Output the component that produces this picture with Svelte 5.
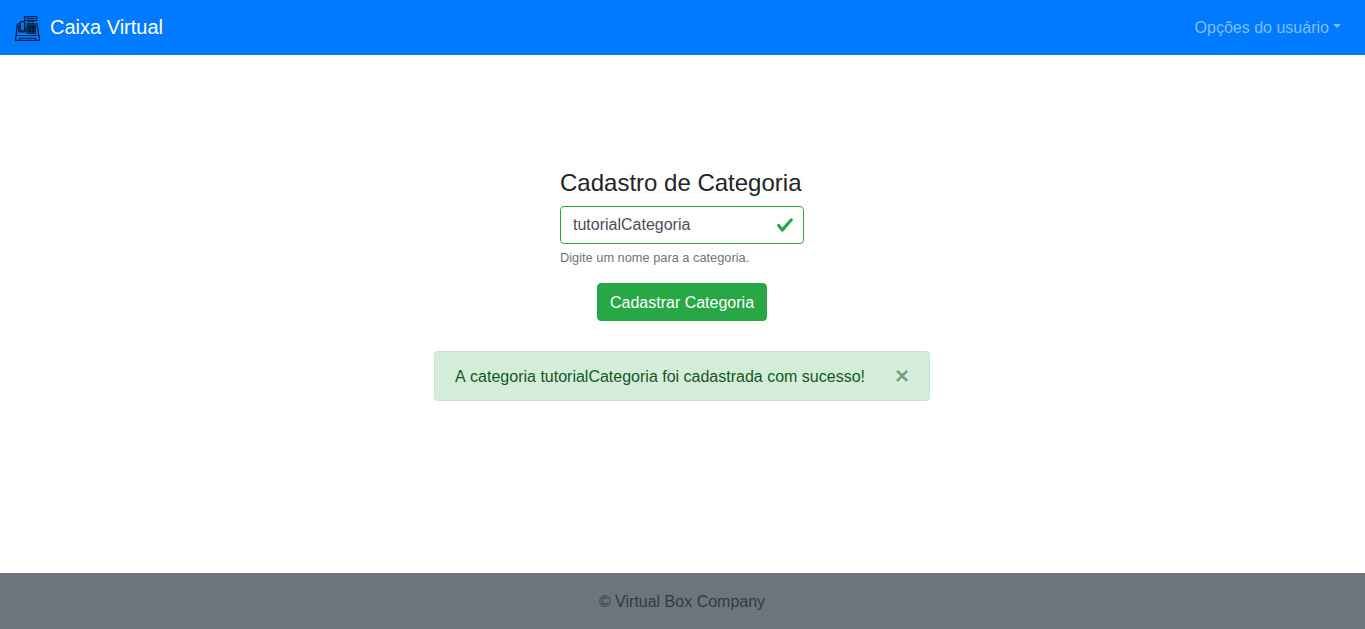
<script>
  let category = $state('tutorialCategoria');
  let saved = $state('tutorialCategoria');
  let open = $state(true);

  function submit(event) {
    event.preventDefault();
    saved = category;
    open = true;
  }
</script>

<div class="page">
  <nav class="navbar">
    <a class="brand" href="#inicio">
      <svg class="logo" viewBox="0 0 25 25" width="25" height="25" fill="none" stroke="#04203f" stroke-width="1.25" stroke-linejoin="round">
        <rect x="9.5" y="0.6" width="12.4" height="4.1" rx=".5" />
        <path d="M11.5 2.6h8.2" stroke-width="1.1" />
        <path d="M14 4.8v2.7M17.2 4.8v2.7" />
        <path d="M10.5 7.9h10.9q.8 0 .9.8l1.5 11M5 7.9H3.2q-.8 0-.9.8l-1.2 11" />
        <path d="M1 19.5h23" stroke-width=".8" />
        <rect x="5.3" y="5.5" width="4.2" height="9.3" rx=".5" />
        <path d="M5.2 9.8H3.9v6h6.6v-5" stroke-width="1.5" />
        <g stroke-width="1.3">
          <rect x="12.3" y="9.5" width="2" height="2" />
          <rect x="15.4" y="9.5" width="2" height="2" />
          <rect x="18.5" y="9.5" width="2" height="2" />
          <rect x="12.3" y="12.4" width="2" height="2" />
          <rect x="15.4" y="12.4" width="2" height="2" />
          <rect x="18.5" y="12.4" width="2" height="2" />
          <rect x="12.3" y="15.3" width="2" height="2" />
          <rect x="15.4" y="15.3" width="2" height="2" />
          <rect x="18.5" y="15.3" width="2" height="2" />
        </g>
        <path d="M1.3 19.6L.6 21v3.4h23.8V21l-.7-1.4" />
        <path d="M4.2 22.2h16.5M4.2 22v2.4M20.7 22v2.4" stroke-width="1" />
      </svg>
      <span>Caixa Virtual</span>
    </a>
    <a class="menu" href="#opcoes">Opções do usuário</a>
  </nav>

  <main>
    <form onsubmit={submit}>
      <h1>Cadastro de Categoria</h1>
      <div class="field">
        <input bind:value={category} aria-label="Categoria" spellcheck="false" />
        <svg class="check" viewBox="0 0 8 8" width="18" height="18" fill="#28a745">
          <path d="M2.3 6.73L.6 4.53c-.4-1.04.46-1.4 1.1-.8l1.1 1.4 3.4-3.8c.6-.63 1.6-.27 1.2.7l-4 4.6c-.43.5-.8.4-1.1.1z" />
        </svg>
      </div>
      <small>Digite um nome para a categoria.</small>
      <button class="submit" type="submit">Cadastrar Categoria</button>
    </form>

    {#if open}
      <div class="alert" role="alert">
        <span>A categoria {saved} foi cadastrada com sucesso!</span>
        <button class="close" type="button" onclick={() => (open = false)}>×</button>
      </div>
    {/if}
  </main>

  <footer>© Virtual Box Company</footer>
</div>

<style>
  :global(body) {
    margin: 0;
    background: #fff;
  }
  .page {
    display: flex;
    flex-direction: column;
    height: 100vh;
    font: 16px/24px "Liberation Sans", Arial, sans-serif;
    color: #212529;
  }
  .page * {
    box-sizing: border-box;
  }
  .navbar {
    display: flex;
    flex: none;
    align-items: center;
    justify-content: space-between;
    height: 55px;
    padding: 0 24px 0 15px;
    background: #007bff;
  }
  a {
    text-decoration: none;
  }
  .brand {
    display: flex;
    align-items: center;
    gap: 10px;
    color: #fff;
    font-size: 20px;
    line-height: 30px;
  }
  .brand span {
    padding-bottom: 2px;
  }
  .logo {
    margin-top: 2px;
  }
  .menu {
    color: rgba(255, 255, 255, 0.5);
  }
  .menu::after {
    content: "";
    display: inline-block;
    margin-left: 4.08px;
    vertical-align: 5px;
    border-top: 4.8px solid;
    border-right: 4.8px solid transparent;
    border-left: 4.8px solid transparent;
  }
  main {
    display: flex;
    flex: 1;
    flex-direction: column;
    align-items: center;
    padding-top: 113px;
  }
  form {
    display: flex;
    flex-direction: column;
    width: 244px;
    margin-right: 1px;
  }
  h1 {
    margin: 0 0 9px;
    font-size: 24px;
    font-weight: 400;
    line-height: 29px;
    white-space: nowrap;
  }
  .field {
    position: relative;
    height: 38px;
  }
  input {
    display: block;
    width: 100%;
    height: 38px;
    padding: 6px 36px 6px 12px;
    border: 1px solid #28a745;
    border-radius: 4px;
    outline: 0;
    background: #fff;
    color: #495057;
    font: inherit;
  }
  .check {
    position: absolute;
    top: 10px;
    right: 10px;
  }
  small {
    margin-top: 4px;
    color: #6c757d;
    font-size: 12.8px;
    line-height: 19px;
  }
  .submit {
    align-self: center;
    width: 170px;
    height: 38px;
    margin-top: 16px;
    padding: 2px 0 0;
    border: 1px solid #28a745;
    border-radius: 4px;
    background: #28a745;
    color: #fff;
    font: inherit;
    white-space: nowrap;
  }
  .alert {
    display: flex;
    align-items: center;
    justify-content: space-between;
    width: 496px;
    height: 50px;
    margin: 30px 1px 0 0;
    padding: 0 20px;
    border: 1px solid #c3e6cb;
    border-radius: 4px;
    background: #d4edda;
    color: #155724;
    white-space: nowrap;
  }
  .alert span {
    padding-top: 2px;
    font-kerning: none;
  }
  .close {
    padding: 0;
    border: 0;
    background: none;
    color: #155724;
    font: 700 24px/24px "Liberation Sans", Arial, sans-serif;
    text-shadow: 0 1px 0 #fff;
    opacity: 0.5;
  }
  footer {
    display: flex;
    flex: none;
    align-items: center;
    justify-content: center;
    height: 56px;
    padding: 2px 1px 0 0;
    background: #6c757d;
    color: #343a40;
  }
</style>
